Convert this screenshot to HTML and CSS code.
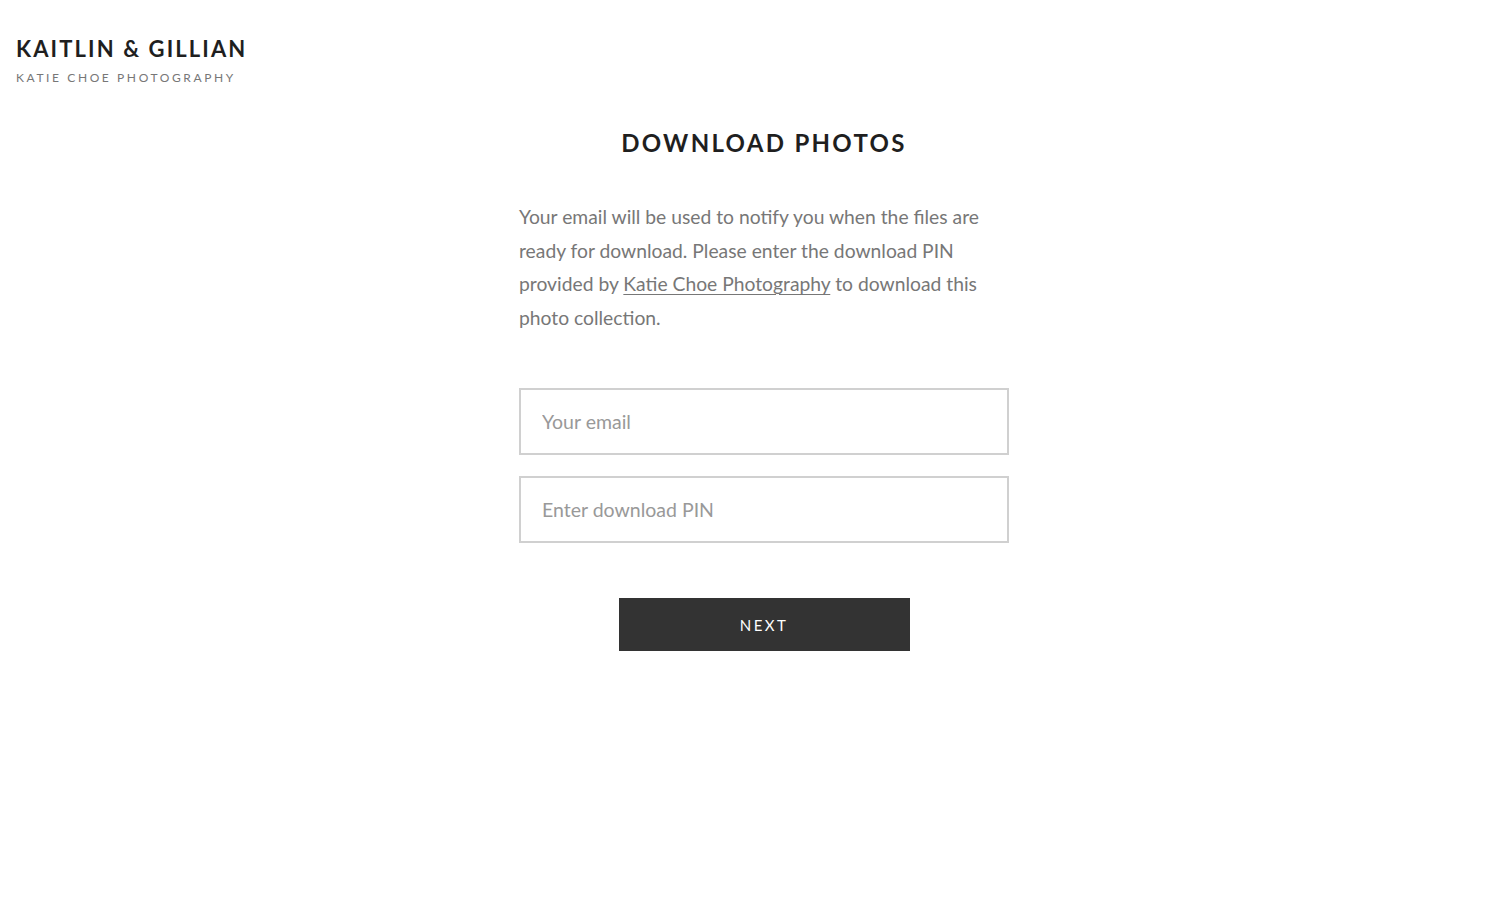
FILE: index.html
```html
<!DOCTYPE html>
<html lang="en">
<head>
<meta charset="utf-8">
<title>Download Photos</title>
<link rel="stylesheet" href="styles.css">
</head>
<body>
<header class="site-header">
  <div class="site-title">KAITLIN &amp; GILLIAN</div>
  <div class="site-subtitle">KATIE CHOE PHOTOGRAPHY</div>
</header>
<main class="main">
  <section class="panel">
    <h1 class="heading">DOWNLOAD PHOTOS</h1>
    <p class="intro">Your email will be used to notify you when the files are ready for download. Please enter the download PIN provided by <a href="#" class="link">Katie Choe Photography</a> to download this photo collection.</p>
    <form class="form">
      <input class="field" type="email" placeholder="Your email">
      <input class="field" type="text" placeholder="Enter download PIN">
      <button class="btn" type="button">NEXT</button>
    </form>
  </section>
</main>
</body>
</html>
```
FILE: styles.css
```css
* { box-sizing: border-box; }
html, body { margin: 0; padding: 0; background: #fff; }
body { font-family: Lato, "Open Sans", sans-serif; color: #222; }

.site-header { padding: 36px 16px 0; }
.site-title {
  font-family: Lato, sans-serif;
  font-weight: 700;
  font-size: 22px;
  letter-spacing: 2.1px;
  color: #1f1f1f;
  line-height: 26px;
}
.site-subtitle {
  margin-top: 8px;
  font-size: 12px;
  letter-spacing: 2.6px;
  color: #777;
  line-height: 16px;
}

.main { display: flex; justify-content: center; padding-left: 28px; }
.panel { width: 490px; display: flex; flex-direction: column; }
.heading {
  margin: 40px 0 0;
  text-align: center;
  font-weight: 700;
  font-size: 24px;
  letter-spacing: 2.3px;
  color: #1f1f1f;
  line-height: 34px;
}
.intro {
  margin: 40px 0 0;
  font-size: 19.3px;
  line-height: 33.5px;
  color: #777;
}
.link { color: #777; text-decoration: underline; text-underline-offset: 3px; text-decoration-thickness: 1px; }

.form { display: flex; flex-direction: column; margin-top: 54px; }
.field {
  height: 67px;
  border: 2px solid #d0d0d0;
  padding: 0 21px;
  font-family: Lato, sans-serif;
  font-size: 19.5px;
  color: #444;
  outline: none;
  margin-bottom: 21px;
}
.field::placeholder { color: #999; }
.btn {
  align-self: center;
  margin-top: 34px;
  width: 291px;
  height: 53px;
  border: none;
  background: #333;
  color: #fff;
  font-family: Lato, sans-serif;
  font-size: 15px;
  letter-spacing: 2.4px;
  cursor: pointer;
}
```
